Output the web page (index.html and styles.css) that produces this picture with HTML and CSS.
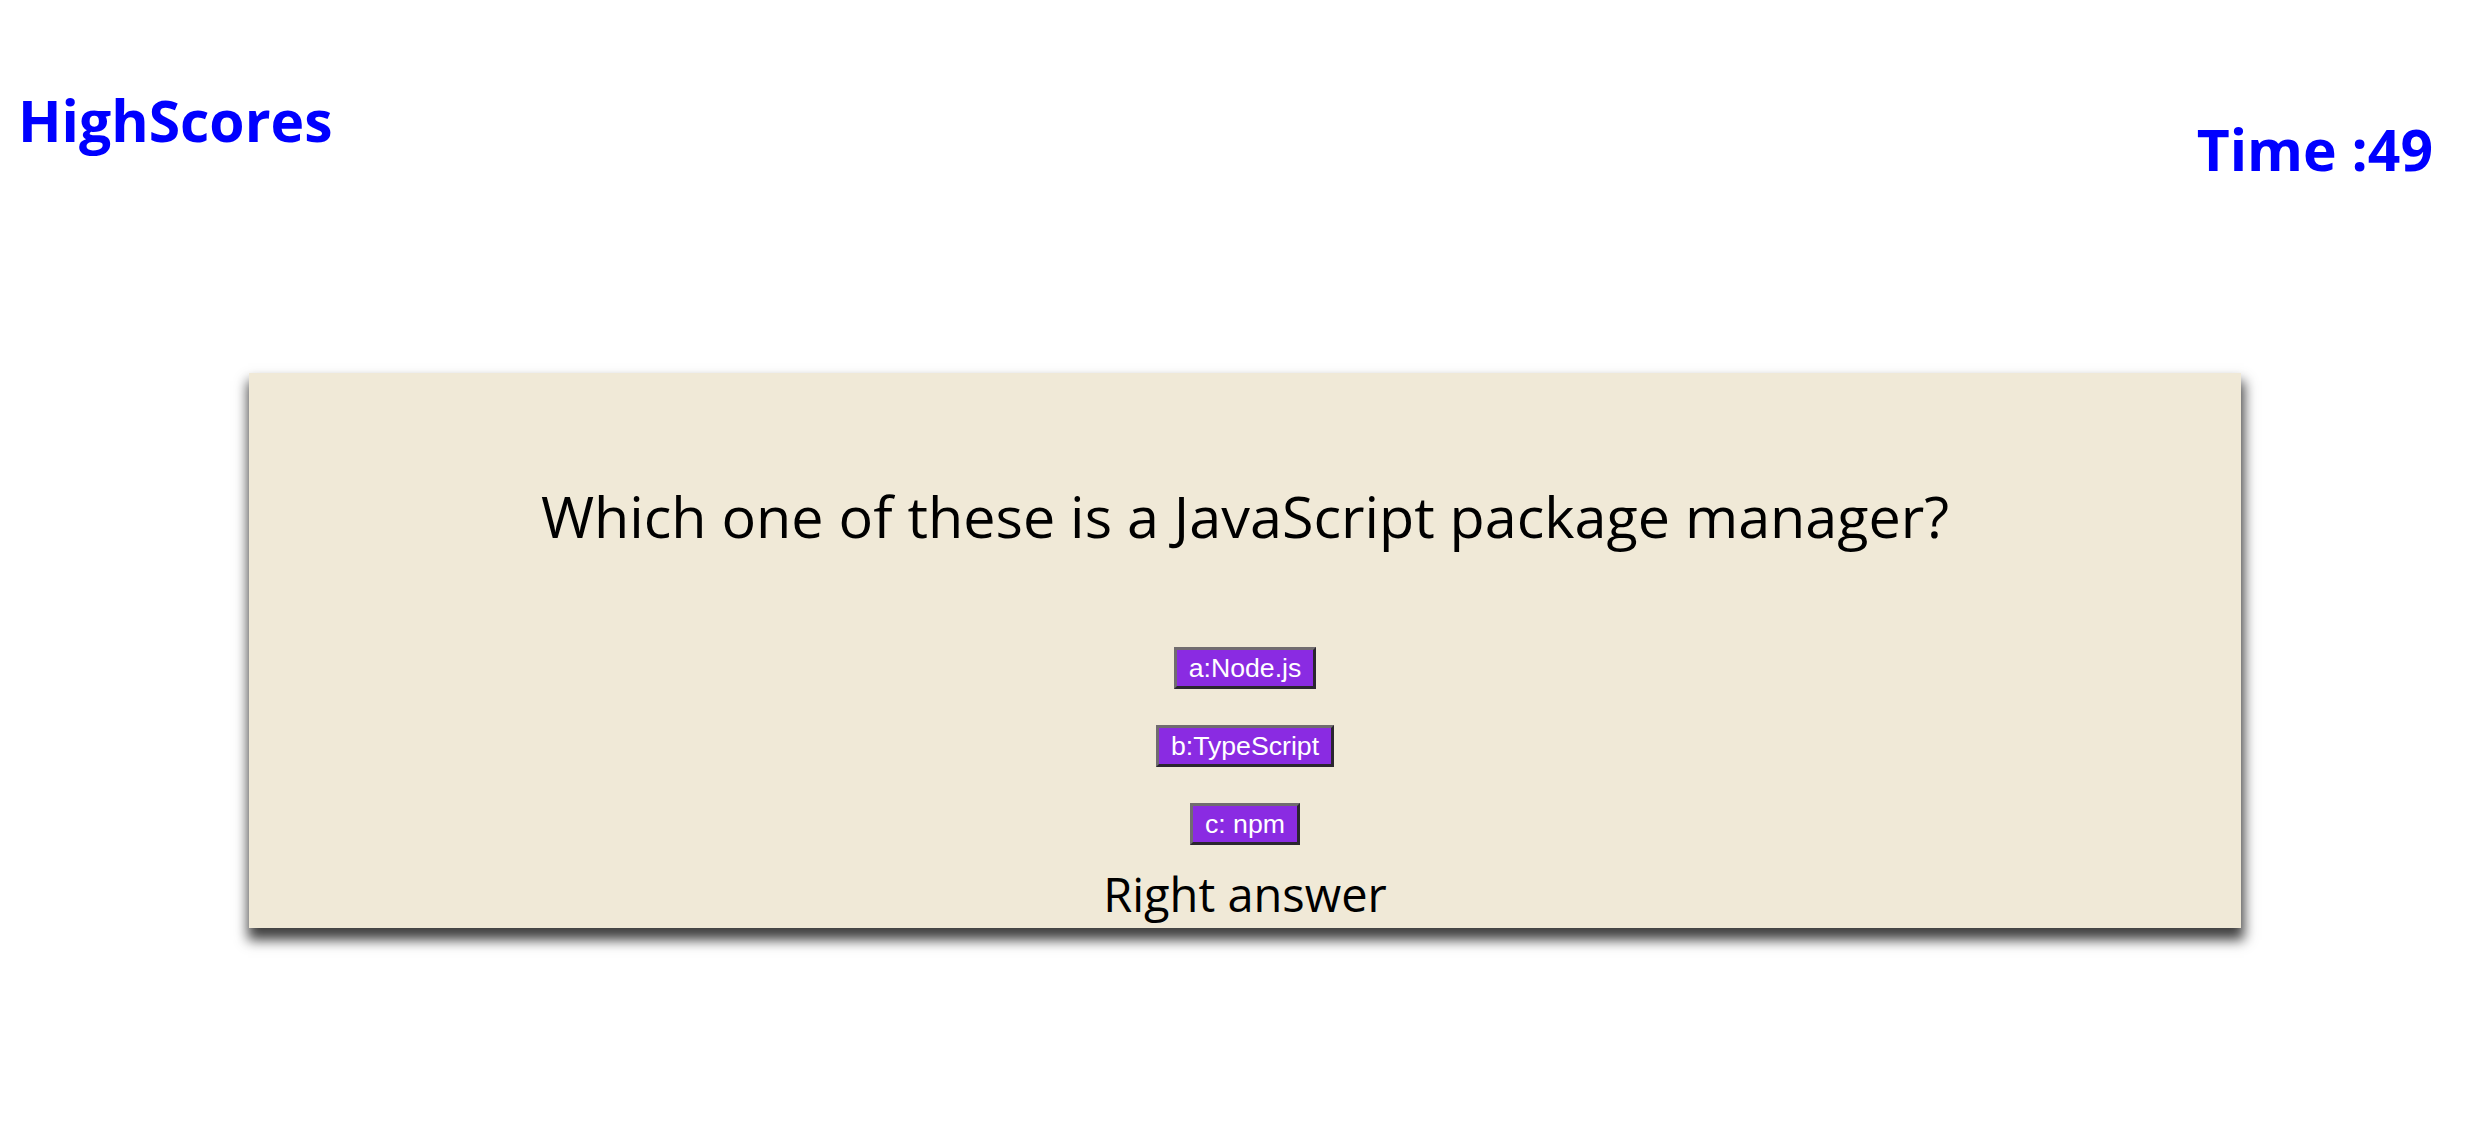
FILE: index.html
```html
<!DOCTYPE html>
<html lang="en">
<head>
<meta charset="utf-8">
<title>Quiz</title>
<link rel="stylesheet" href="styles.css">
</head>
<body>
<header class="top-bar">
  <h1 class="high-scores">HighScores</h1>
  <h1 class="timer">Time :49</h1>
</header>
<main class="quiz-card">
  <h2 class="question">Which one of these is a JavaScript package manager?</h2>
  <div class="answers">
    <button class="answer-btn">a:Node.js</button>
    <button class="answer-btn">b:TypeScript</button>
    <button class="answer-btn">c: npm</button>
  </div>
  <p class="result">Right answer</p>
</main>
</body>
</html>
```
FILE: styles.css
```css
html, body {
  margin: 0;
  padding: 0;
  background: #ffffff;
}

html {
  height: 100%;
}

body {
  min-height: 100%;
  font-family: "Open Sans", "Noto Sans", sans-serif;
}

.top-bar {
  display: flex;
  justify-content: space-between;
  align-items: flex-start;
  padding: 0 57px 0 18px;
}

.high-scores,
.timer {
  margin: 0;
  color: #0000ff;
  font-weight: 700;
  font-size: 57px;
  line-height: 78px;
}

.high-scores {
  margin-top: 81px;
}

.timer {
  margin-top: 110px;
}

.quiz-card {
  width: 80%;
  margin: 185px auto 0;
  background: #f0e9d7;
  box-shadow: 1px 10px 12px 2px rgba(0, 0, 0, 0.75);
  display: flex;
  flex-direction: column;
  align-items: center;
  padding: 104px 0 2px;
}

.question {
  margin: 0;
  font-weight: 400;
  font-size: 57.5px;
  line-height: 78px;
  color: #000;
}

.answers {
  display: flex;
  flex-direction: column;
  align-items: center;
  gap: 36px;
  margin-top: 92px;
}

.answer-btn {
  font-family: "Liberation Sans", Arial, sans-serif;
  font-size: 26.67px;
  line-height: 32px;
  color: #ffffff;
  background: #8a2be2;
  padding: 2px 12px;
  border-width: 3px;
  border-style: solid;
  border-color: #716c70 #2b2630 #2b2630 #716c70;
  margin: 0;
}

.result {
  margin: 17px 0 0;
  font-size: 47px;
  line-height: 64px;
  color: #000;
}
```
